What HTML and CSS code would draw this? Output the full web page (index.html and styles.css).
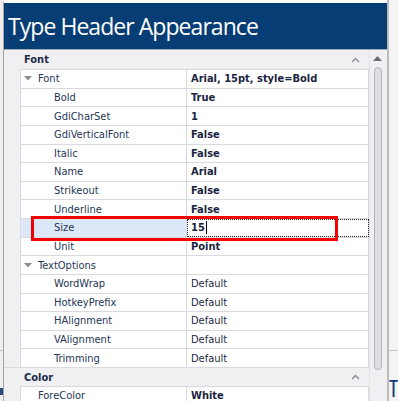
FILE: index.html
```html
<!DOCTYPE html>
<html lang="en">
<head>
    <meta charset="UTF-8">
    <meta name="viewport" content="width=device-width, initial-scale=1.0">
    <title>Type Header Appearance</title>
    <link rel="stylesheet" href="styles.css">
</head>
<body>

    <div class="edge-left">
        <span class="edge-line"></span>
        <span class="edge-ink"></span>
    </div>

    <div class="window">
        <div class="title-bar">Type Header Appearance</div>

        <div class="grid">
            <div class="grid-main">

                <div class="category">
                    <span>Font</span>
                    <svg class="chevron" width="9" height="6" viewBox="0 0 9 6"><polyline points="1,5 4.5,1.5 8,5" fill="none" stroke="#8a8a90" stroke-width="1.4"/></svg>
                </div>

                <div class="prop">
                    <div class="name top"><svg class="arrow" width="8" height="5" viewBox="0 0 8 5"><polygon points="0,0 8,0 4,4.5" fill="#8c8c94"/></svg>Font</div>
                    <div class="value bold">Arial, 15pt, style=Bold</div>
                </div>
                <div class="prop">
                    <div class="name">Bold</div>
                    <div class="value bold">True</div>
                </div>
                <div class="prop">
                    <div class="name">GdiCharSet</div>
                    <div class="value bold">1</div>
                </div>
                <div class="prop">
                    <div class="name">GdiVerticalFont</div>
                    <div class="value bold">False</div>
                </div>
                <div class="prop">
                    <div class="name">Italic</div>
                    <div class="value bold">False</div>
                </div>
                <div class="prop">
                    <div class="name">Name</div>
                    <div class="value bold">Arial</div>
                </div>
                <div class="prop">
                    <div class="name">Strikeout</div>
                    <div class="value bold">False</div>
                </div>
                <div class="prop">
                    <div class="name">Underline</div>
                    <div class="value bold">False</div>
                </div>
                <div class="prop selected">
                    <div class="name">Size</div>
                    <div class="value bold editing">15<span class="caret"></span></div>
                </div>
                <div class="prop">
                    <div class="name">Unit</div>
                    <div class="value bold">Point</div>
                </div>
                <div class="prop">
                    <div class="name top"><svg class="arrow" width="8" height="5" viewBox="0 0 8 5"><polygon points="0,0 8,0 4,4.5" fill="#8c8c94"/></svg>TextOptions</div>
                    <div class="value"></div>
                </div>
                <div class="prop">
                    <div class="name">WordWrap</div>
                    <div class="value">Default</div>
                </div>
                <div class="prop">
                    <div class="name">HotkeyPrefix</div>
                    <div class="value">Default</div>
                </div>
                <div class="prop">
                    <div class="name">HAlignment</div>
                    <div class="value">Default</div>
                </div>
                <div class="prop">
                    <div class="name">VAlignment</div>
                    <div class="value">Default</div>
                </div>
                <div class="prop">
                    <div class="name">Trimming</div>
                    <div class="value">Default</div>
                </div>

                <div class="category lined">
                    <span>Color</span>
                    <svg class="chevron" width="9" height="6" viewBox="0 0 9 6"><polyline points="1,5 4.5,1.5 8,5" fill="none" stroke="#8a8a90" stroke-width="1.4"/></svg>
                </div>

                <div class="prop">
                    <div class="name top-child">ForeColor</div>
                    <div class="value bold">White</div>
                </div>

            </div>

            <div class="scrollbar">
                <svg class="scroll-up" width="9" height="5" viewBox="0 0 9 5"><polygon points="0,5 9,5 4.5,0" fill="#6c6c74"/></svg>
                <div class="thumb"></div>
            </div>
        </div>
    </div>

    <div class="edge-right">
        <span class="edge-line"></span>
        <span class="bg-text">Ta</span>
    </div>

    <!-- annotation drawn over the Size row -->
    <div class="highlight-box"></div>

</body>
</html>
```

FILE: styles.css
```css
/* General Styles */
* {
    margin: 0;
    padding: 0;
    box-sizing: border-box;
}

body {
    font-family: 'DejaVu Sans Condensed', 'DejaVu Sans', sans-serif;
    font-stretch: condensed;
    font-size: 11px;
    background-color: #f2f2f3;
    color: #1f2d4a;
    display: flex;
    height: 401px;
    overflow: hidden;
    position: relative;
}

/* Background strips left and right of the window */
.edge-left {
    width: 3px;
    position: relative;
    background-color: #eeeeef;
}

.edge-right {
    flex: 1;
    position: relative;
    background-color: #f4f4f5;
    border-left: 2px solid #bdbdc0;
    overflow: hidden;
}

.edge-line {
    position: absolute;
    left: 0;
    right: 0;
    top: 350px;
    border-top: 1px solid #c6c6c9;
}

.edge-ink {
    position: absolute;
    left: 0;
    top: 388px;
    width: 3px;
    height: 7px;
    background-color: #2a4a80;
}

.bg-text {
    position: absolute;
    left: 0;
    top: 376px;
    font-family: 'Open Sans', sans-serif;
    font-size: 24px;
    line-height: 24px;
    color: #173c78;
}

/* Window */
.window {
    width: 384px;
    display: flex;
    flex-direction: column;
    border-top: 3px solid #ffffff;
    border-left: 1px solid #a4a4a8;
}

.title-bar {
    height: 46px;
    background-color: #073d75;
    color: #ffffff;
    font-family: 'Open Sans', sans-serif;
    font-stretch: normal;
    font-size: 23px;
    letter-spacing: -0.95px;
    line-height: 46px;
    padding-left: 4px;
    white-space: nowrap;
}

/* Property grid */
.grid {
    flex: 1;
    display: flex;
    border-top: 1px solid #a9a9b0;
    overflow: hidden;
}

.grid-main {
    flex: 1;
    background-color: #f0f0f2;
}

.category {
    height: 19px;
    display: flex;
    align-items: center;
    justify-content: space-between;
    padding: 0 9px 0 20px;
    font-weight: bold;
    color: #1c2c4c;
}

.category.lined {
    border-top: 1px solid #d9d9de;
}

.chevron {
    display: block;
}

.prop {
    height: 18.625px;
    margin-left: 16px;
    display: grid;
    grid-template-columns: 166px 182px;
    background-color: #ffffff;
    border-top: 1px solid #d9d9de;
    border-left: 1px solid #d9d9de;
}

.name,
.value {
    display: flex;
    align-items: center;
    white-space: nowrap;
    overflow: hidden;
}

.name {
    padding-left: 33px;
    border-right: 1px solid #d9d9de;
    color: #253656;
}

.name.top {
    padding-left: 3px;
}

.name.top-child {
    padding-left: 17px;
}

.arrow {
    margin-right: 6px;
}

.value {
    padding-left: 4px;
    border-right: 1px solid #d9d9de;
    color: #1d2a45;
}

.value.bold {
    font-weight: bold;
    color: #1a2440;
}

.selected .name {
    background-color: #dce7f7;
}

.value.editing {
    outline: 1px dotted #2a2a2a;
    outline-offset: -1px;
}

.caret {
    display: inline-block;
    width: 1px;
    height: 13px;
    margin-left: 1px;
    background-color: #000000;
}

/* Scrollbar */
.scrollbar {
    width: 18px;
    background-color: #f0f0f2;
    border-left: 1px solid #e2e2e6;
    display: flex;
    flex-direction: column;
    align-items: center;
    padding-top: 6px;
}

.scroll-up {
    display: block;
    margin-left: -2px;
}

.thumb {
    width: 8px;
    height: 303px;
    margin-top: 6px;
    margin-left: -2px;
    background-color: #dfdfe3;
    border: 1px solid #b3b3bb;
    border-radius: 4px;
}

/* Red annotation box */
.highlight-box {
    position: absolute;
    left: 31px;
    top: 216px;
    width: 307px;
    height: 25px;
    border: 3px solid #f40000;
}
```
